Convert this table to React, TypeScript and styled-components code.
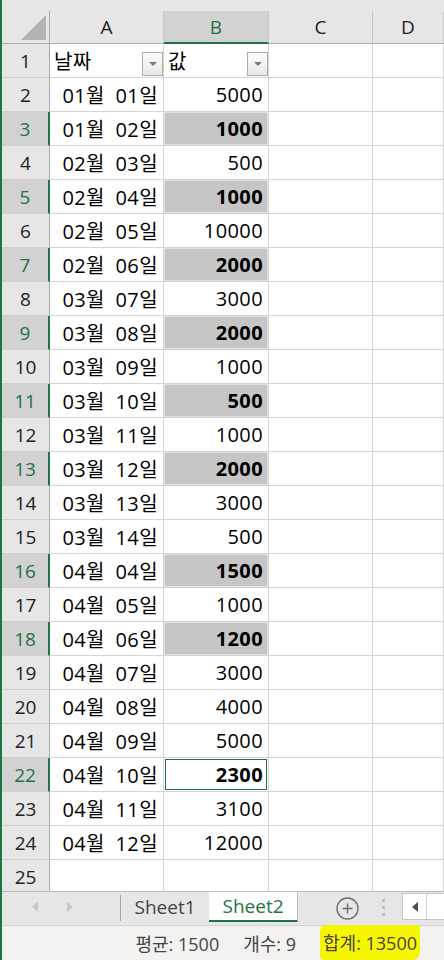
import React from 'react'
import styled, { createGlobalStyle, css } from 'styled-components'

const GREEN = '#217346'
const FONT = `"Open Sans", "Noto Sans CJK KR", sans-serif`

interface Row {
  date: string;
  value: string;
  selected?: boolean;
  active?: boolean;
}

const rows: Row[] = [
  { date: '01월 01일', value: '5000' },
  { date: '01월 02일', value: '1000', selected: true },
  { date: '02월 03일', value: '500' },
  { date: '02월 04일', value: '1000', selected: true },
  { date: '02월 05일', value: '10000' },
  { date: '02월 06일', value: '2000', selected: true },
  { date: '03월 07일', value: '3000' },
  { date: '03월 08일', value: '2000', selected: true },
  { date: '03월 09일', value: '1000' },
  { date: '03월 10일', value: '500', selected: true },
  { date: '03월 11일', value: '1000' },
  { date: '03월 12일', value: '2000', selected: true },
  { date: '03월 13일', value: '3000' },
  { date: '03월 14일', value: '500' },
  { date: '04월 04일', value: '1500', selected: true },
  { date: '04월 05일', value: '1000' },
  { date: '04월 06일', value: '1200', selected: true },
  { date: '04월 07일', value: '3000' },
  { date: '04월 08일', value: '4000' },
  { date: '04월 09일', value: '5000' },
  { date: '04월 10일', value: '2300', selected: true, active: true },
  { date: '04월 11일', value: '3100' },
  { date: '04월 12일', value: '12000' },
]

const columns = ['A', 'B', 'C', 'D']

const App = () => {
  return (
    <>
      <GlobalStyle />
      <Window>
        <TopBand />
        <Sheet>
          <Corner>
            <CornerTriangle />
          </Corner>
          {columns.map((c) => (
            <ColHead key={c} $sel={c === 'B'}>
              {c}
            </ColHead>
          ))}

          <RowHead>1</RowHead>
          <Cell>
            <span>날짜</span>
            <FilterButton />
          </Cell>
          <Cell>
            <span>값</span>
            <FilterButton />
          </Cell>
          <Cell />
          <Cell />

          {rows.map((r, idx) => (
            <React.Fragment key={idx}>
              <RowHead $sel={r.selected}>{idx + 2}</RowHead>
              <Cell $right>{r.date}</Cell>
              <Cell $right $sel={r.selected && !r.active} $active={r.active}>
                {r.value}
              </Cell>
              <Cell />
              <Cell />
            </React.Fragment>
          ))}

          <RowHead>25</RowHead>
          <Cell />
          <Cell />
          <Cell />
          <Cell />
        </Sheet>

        <TabBar>
          <TabNav>
            <NavArrow $dir="left" />
            <NavArrow $dir="right" />
          </TabNav>
          <TabDivider />
          <SheetTab>Sheet1</SheetTab>
          <SheetTab $active>Sheet2</SheetTab>
          <AddSheet>
            <svg width="23" height="23" viewBox="0 0 23 23">
              <circle cx="11.5" cy="11.5" r="10.5" fill="none" stroke="#6f6f6f" strokeWidth="1.4" />
              <path d="M11.5 6.5v10M6.5 11.5h10" stroke="#6f6f6f" strokeWidth="1.4" />
            </svg>
          </AddSheet>
          <Dots>
            <i />
            <i />
            <i />
          </Dots>
          <HScroll>
            <ScrollBtn>
              <NavArrow $dir="left" $dark />
            </ScrollBtn>
          </HScroll>
        </TabBar>

        <StatusBar>
          <span>평균: 1500</span>
          <span>개수: 9</span>
          <Highlight>합계: 13500</Highlight>
        </StatusBar>
      </Window>
    </>
  )
}

export default App

const GlobalStyle = createGlobalStyle`
  html, body {
    margin: 0;
    padding: 0;
    background: #fff;
  }

  body {
    font-family: ${FONT};
  }

  * {
    box-sizing: border-box;
  }
`

const Window = styled.div`
  width: 444px;
  height: 960px;
  display: flex;
  flex-direction: column;
  border-left: 2px solid ${GREEN};
  overflow: hidden;
`

const TopBand = styled.div`
  height: 11px;
  flex-shrink: 0;
  background: #e6e6e6;
`

const Sheet = styled.div`
  flex: 1;
  min-height: 0;
  overflow: hidden;
  display: grid;
  grid-template-columns: 48px 114px 105px 104px 1fr;
  grid-template-rows: 33px;
  grid-auto-rows: 34px;
`

const Corner = styled.div`
  background: #e6e6e6;
  border-right: 1px solid #ababab;
  border-bottom: 1px solid #ababab;
  display: flex;
  align-items: flex-end;
  justify-content: flex-end;
  padding: 0 3px 3px 0;
`

const CornerTriangle = styled.div`
  width: 25px;
  height: 25px;
  background: #b4b4b4;
  clip-path: polygon(100% 0, 100% 100%, 0 100%);
`

const ColHead = styled.div<{ $sel?: boolean }>`
  display: flex;
  align-items: center;
  justify-content: center;
  font-size: 19px;
  background: ${(p) => (p.$sel ? '#d2d2d2' : '#e6e6e6')};
  color: ${(p) => (p.$sel ? GREEN : '#222')};
  border-right: 1px solid #c6c6c6;
  border-bottom: ${(p) => (p.$sel ? `2px solid ${GREEN}` : '1px solid #ababab')};
`

const RowHead = styled.div<{ $sel?: boolean }>`
  display: flex;
  align-items: center;
  justify-content: center;
  font-size: 19px;
  background: ${(p) => (p.$sel ? '#d2d2d2' : '#e6e6e6')};
  color: ${(p) => (p.$sel ? GREEN : '#222')};
  border-right: ${(p) => (p.$sel ? `2px solid ${GREEN}` : '1px solid #ababab')};
  border-bottom: 1px solid #cfcfcf;
`

const Cell = styled.div<{ $right?: boolean; $sel?: boolean; $active?: boolean }>`
  display: flex;
  align-items: center;
  justify-content: ${(p) => (p.$right ? 'flex-end' : 'space-between')};
  padding: 0 5px 0 4px;
  border-right: 1px solid #d4d4d4;
  border-bottom: 1px solid #d4d4d4;
  font-size: 20px;
  letter-spacing: 0.4px;
  word-spacing: 5px;
  color: #000;
  white-space: nowrap;
  overflow: hidden;

  ${(p) =>
    p.$sel &&
    css`
      background: #c6c6c6;
      box-shadow: inset 0 0 0 1px #e0e0e0;
      font-weight: 700;
    `}

  ${(p) =>
    p.$active &&
    css`
      background: #fff;
      box-shadow: inset 0 0 0 1px #fff, inset 0 0 0 2px ${GREEN};
      font-weight: 700;
    `}
`

const FilterButton = styled.div`
  align-self: flex-end;
  flex-shrink: 0;
  width: 21px;
  height: 24px;
  margin: 0 -5px 1px 0;
  border: 1px solid #ababab;
  background: linear-gradient(#fdfdfd, #e8e8e8);
  display: flex;
  align-items: center;
  justify-content: center;

  &::after {
    content: '';
    border-left: 4px solid transparent;
    border-right: 4px solid transparent;
    border-top: 4px solid #7a7a7a;
  }
`

const TabBar = styled.div`
  height: 34px;
  flex-shrink: 0;
  display: flex;
  align-items: flex-start;
  background: #e6e6e6;
  border-top: 1px solid #bdbdbd;

  & > * {
    flex-shrink: 0;
  }
`

const TabNav = styled.div`
  width: 118px;
  height: 30px;
  display: flex;
  align-items: center;
  padding-left: 30px;
  gap: 29px;
`

const NavArrow = styled.div<{ $dir: 'left' | 'right'; $dark?: boolean }>`
  width: 0;
  height: 0;
  border-top: 5px solid transparent;
  border-bottom: 5px solid transparent;
  ${(p) =>
    p.$dir === 'left'
      ? css`border-right: 6px solid ${p.$dark ? '#505050' : '#c6c6c6'};`
      : css`border-left: 6px solid ${p.$dark ? '#505050' : '#c6c6c6'};`}
`

const TabDivider = styled.div`
  width: 1px;
  height: 26px;
  margin-top: 3px;
  background: #a6a6a6;
`

const SheetTab = styled.div<{ $active?: boolean }>`
  width: ${(p) => (p.$active ? '89px' : '88px')};
  height: 30px;
  display: flex;
  align-items: center;
  justify-content: center;
  font-size: 19px;
  color: #444;

  ${(p) =>
    p.$active &&
    css`
      background: #fff;
      color: ${GREEN};
      border-right: 1px solid #bdbdbd;
      border-bottom: 2px solid ${GREEN};
    `}
`

const AddSheet = styled.div`
  margin: 5px 0 0 38px;
  display: flex;
`

const Dots = styled.div`
  margin: 7px 0 0 23px;
  display: flex;
  flex-direction: column;
  gap: 4px;

  & i {
    display: block;
    width: 3px;
    height: 3px;
    background: #c2c2c2;
  }
`

const HScroll = styled.div`
  margin: 1px 0 0 17px;
  width: 60px;
  height: 27px;
  background: #fff;
  border: 1px solid #c6c6c6;
  display: flex;
`

const ScrollBtn = styled.div`
  width: 24px;
  border-right: 1px solid #d4d4d4;
  display: flex;
  align-items: center;
  justify-content: center;
`

const StatusBar = styled.div`
  height: 35px;
  flex-shrink: 0;
  display: flex;
  align-items: center;
  justify-content: flex-end;
  gap: 24px;
  padding-right: 24px;
  background: #f3f2f1;
  border-top: 1px solid #d4d4d4;
  font-size: 18px;
  color: #444;
`

const Highlight = styled.span`
  display: inline-flex;
  align-items: center;
  height: 35px;
  margin-top: -2px;
  padding: 0 3px;
  background: #f6f600;
  border-radius: 6px 3px 8px 4px;
`
